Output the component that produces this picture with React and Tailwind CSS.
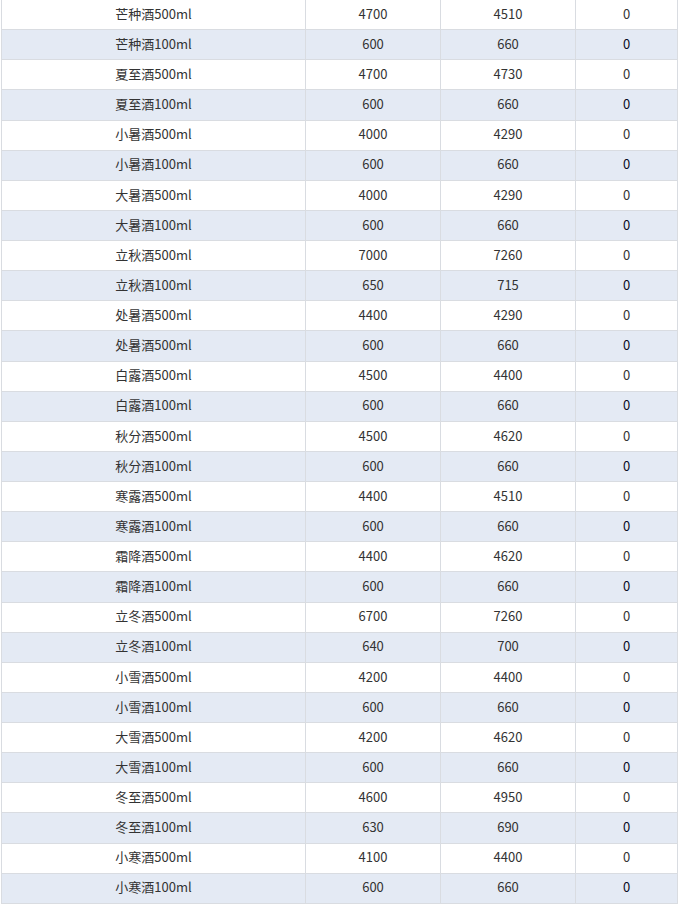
import React from "react";

const rows = [
  ["芒种酒500ml", "4700", "4510", "0"],
  ["芒种酒100ml", "600", "660", "0"],
  ["夏至酒500ml", "4700", "4730", "0"],
  ["夏至酒100ml", "600", "660", "0"],
  ["小暑酒500ml", "4000", "4290", "0"],
  ["小暑酒100ml", "600", "660", "0"],
  ["大暑酒500ml", "4000", "4290", "0"],
  ["大暑酒100ml", "600", "660", "0"],
  ["立秋酒500ml", "7000", "7260", "0"],
  ["立秋酒100ml", "650", "715", "0"],
  ["处暑酒500ml", "4400", "4290", "0"],
  ["处暑酒500ml", "600", "660", "0"],
  ["白露酒500ml", "4500", "4400", "0"],
  ["白露酒100ml", "600", "660", "0"],
  ["秋分酒500ml", "4500", "4620", "0"],
  ["秋分酒100ml", "600", "660", "0"],
  ["寒露酒500ml", "4400", "4510", "0"],
  ["寒露酒100ml", "600", "660", "0"],
  ["霜降酒500ml", "4400", "4620", "0"],
  ["霜降酒100ml", "600", "660", "0"],
  ["立冬酒500ml", "6700", "7260", "0"],
  ["立冬酒100ml", "640", "700", "0"],
  ["小雪酒500ml", "4200", "4400", "0"],
  ["小雪酒100ml", "600", "660", "0"],
  ["大雪酒500ml", "4200", "4620", "0"],
  ["大雪酒100ml", "600", "660", "0"],
  ["冬至酒500ml", "4600", "4950", "0"],
  ["冬至酒100ml", "630", "690", "0"],
  ["小寒酒500ml", "4100", "4400", "0"],
  ["小寒酒100ml", "600", "660", "0"],
];

const App = () => {
  return (
    <div className="w-[678px] bg-white overflow-hidden" style={{ fontFamily: '"Noto Sans CJK SC", "Noto Sans", sans-serif' }}>
      <div className="ml-px mt-[-1px] w-[677px] border-t border-r border-l border-[#d9dce1] text-[13px] text-[#333]">
        {rows.map((r, i) => {
          const striped = i % 2 === 1;
          return (
            <div
              key={i}
              className={`grid grid-cols-[304px_135px_135px_1fr] h-[30.13px] border-b border-[#d9dce1] ${striped ? "bg-[#e4eaf4]" : "bg-white"}`}
            >
              <div className="flex items-center justify-center pb-[2px] border-r border-[#d9dce1]">{r[0]}</div>
              <div className="flex items-center justify-center pb-[2px] border-r border-[#d9dce1]">{r[1]}</div>
              <div className="flex items-center justify-center pb-[2px] border-r border-[#d9dce1]">{r[2]}</div>
              <div className={`flex items-center justify-center pb-[2px] ${striped ? "text-[#0a0a1e]" : ""}`}>{r[3]}</div>
            </div>
          );
        })}
      </div>
    </div>
  );
};

export default App;
